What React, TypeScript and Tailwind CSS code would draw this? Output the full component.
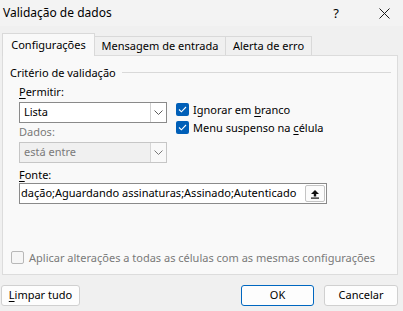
import React from 'react'

const font = { fontFamily: '"Noto Sans", "Open Sans", sans-serif' }

function Chevron({ color = '#5c5c5c' }: { color?: string }) {
  return (
    <svg width="9" height="5" viewBox="0 0 9 5" fill="none">
      <path d="M0.5 0.5 L4.5 4.5 L8.5 0.5" stroke={color} strokeWidth="1" />
    </svg>
  )
}

function Check() {
  return (
    <span className="flex h-[13px] w-[13px] items-center justify-center rounded-[2px] bg-[#005fb8]">
      <svg width="9" height="7" viewBox="0 0 9 7" fill="none">
        <path d="M1 3.5 L3.4 5.8 L8 1" stroke="#fff" strokeWidth="1.1" />
      </svg>
    </span>
  )
}

export default function App() {
  return (
    <div className="h-[311px] w-[403px] overflow-hidden bg-[#f0f0f0] text-[11px] text-black" style={font}>
      {/* title bar */}
      <div className="flex h-[26px] items-center bg-[#f3f3f3] pl-[3px] text-[12px]">
        <span className="flex-1 leading-none">Validação de dados</span>
        <span className="w-[24px] text-center text-[13px] leading-none">?</span>
        <span className="ml-[29px] mr-[12px] flex w-[14px] justify-center">
          <svg width="11" height="11" viewBox="0 0 11 11" fill="none">
            <path d="M0.5 0.5 L10.5 10.5 M10.5 0.5 L0.5 10.5" stroke="#1a1a1a" strokeWidth="1" />
          </svg>
        </span>
      </div>

      {/* tabs */}
      <div className="mt-[7px] flex items-end pl-[2px]">
        <div className="relative z-10 -mb-px flex h-[23px] w-[93px] items-start justify-center border border-b-0 border-[#d9d9d9] bg-[#f9f9f9] pt-[4px] leading-[14px]">
          Configurações
        </div>
        <div className="flex h-[19px] w-[131px] items-center justify-center border border-l-0 border-b-0 border-[#d9d9d9] bg-[#f0f0f0] pt-[1px]">
          Mensagem de entrada
        </div>
        <div className="flex h-[19px] w-[86px] items-center justify-center border border-l-0 border-b-0 border-[#d9d9d9] bg-[#f0f0f0] pt-[1px]">
          Alerta de erro
        </div>
      </div>

      {/* panel */}
      <div className="ml-[2px] flex h-[220px] w-[396px] flex-col border border-[#dcdcdc] bg-[#f9f9f9]">
        <div className="mt-[9px] flex h-[14px] items-center pl-[7px]">
          <span className="leading-none">Critério de validação</span>
          <span className="ml-[6px] mr-[6px] h-px flex-1 bg-[#d9d9d9]" />
        </div>

        <div className="flex pl-[16px]">
          <div className="flex w-[148px] flex-col">
            <div className="mt-[6px] h-[14px] leading-[14px]">
              <span className="underline underline-offset-2">P</span>ermitir:
            </div>
            <div className="mt-[3px] flex h-[21px] border border-[#8a8a8a] bg-white">
              <span className="flex flex-1 items-center pl-[4px]">Lista</span>
              <span className="flex w-[16px] items-center justify-center border-l border-[#d0d0d0]">
                <Chevron />
              </span>
            </div>
            <div className="mt-[2px] h-[14px] leading-[14px] text-[#7a7a7a]">Dados:</div>
            <div className="mt-[3px] flex h-[21px] border border-[#c6c6c6] bg-[#f0f0f0] text-[#7a7a7a]">
              <span className="flex flex-1 items-center pl-[4px]">está entre</span>
              <span className="flex w-[16px] items-center justify-center border-l border-[#d6d6d6] bg-[#f9f9f9]">
                <Chevron color="#7a7a7a" />
              </span>
            </div>
          </div>
          <div className="ml-[9px] mt-[24px] flex flex-col gap-[5px]">
            <div className="flex h-[13px] items-center gap-[4px]">
              <Check />
              <span className="leading-none">
                Ignorar em <span className="underline underline-offset-2">b</span>ranco
              </span>
            </div>
            <div className="flex h-[13px] items-center gap-[4px]">
              <Check />
              <span className="leading-none">
                Menu suspenso na <span className="underline underline-offset-2">c</span>élula
              </span>
            </div>
          </div>
        </div>

        <div className="mt-[5px] h-[14px] pl-[16px] leading-[14px]">
          <span className="underline underline-offset-2">F</span>onte:
        </div>
        <div className="ml-[16px] mt-px flex h-[21px] w-[308px] items-center overflow-hidden border border-[#8a8a8a] bg-white">
          <span className="flex-1 overflow-hidden whitespace-nowrap pl-[1px]">dação;Aguardando assinaturas;Assinado;Autenticado</span>
          <span className="mr-[1px] flex h-[17px] w-[20px] shrink-0 items-center justify-center rounded-[2px] border border-[#c4c4c4] bg-[#fbfbfb]">
            <svg width="10" height="10" viewBox="0 0 10 10" fill="#111">
              <path d="M5 1 L9 5 L6.2 5 L6.2 7.5 L3.8 7.5 L3.8 5 L1 5 Z" />
              <rect x="1" y="8.5" width="8" height="1.2" />
            </svg>
          </span>
        </div>

        <div className="mt-auto mb-[10px] flex items-center gap-[5px] pl-[8px] text-[#7a7a7a]">
          <span className="h-[13px] w-[13px] rounded-[2px] border border-[#b8b8b8] bg-[#f6f6f6]" />
          <span className="whitespace-nowrap leading-none">Aplicar alterações a todas as células com as mesmas configurações</span>
        </div>
      </div>

      {/* buttons */}
      <div className="mt-[10px] flex items-center pl-px pr-[5px]">
        <button className="flex h-[21px] w-[79px] items-center justify-center rounded-[3px] border border-[#d0d0d0] bg-[#fdfdfd]">
          <span>
            <span className="underline underline-offset-2">L</span>impar tudo
          </span>
        </button>
        <span className="flex-1" />
        <button className="flex h-[21px] w-[73px] items-center justify-center rounded-[3px] border border-[#0067c0] bg-[#fdfdfd]">
          OK
        </button>
        <button className="ml-[10px] flex h-[21px] w-[74px] items-center justify-center rounded-[3px] border border-[#d0d0d0] bg-[#fdfdfd]">
          Cancelar
        </button>
      </div>
    </div>
  )
}
